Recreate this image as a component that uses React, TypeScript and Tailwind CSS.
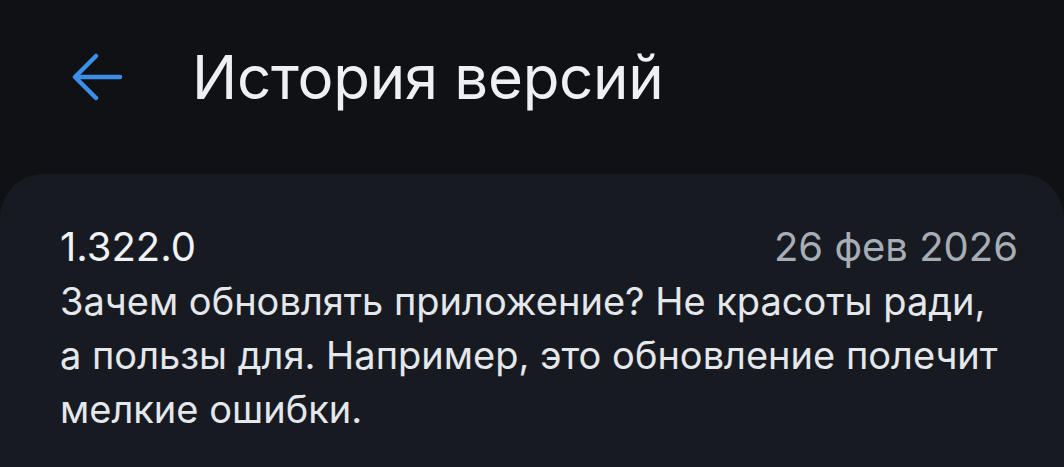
export default function App() {
  return (
    <div
      className="w-[1064px] h-[467px] overflow-hidden bg-[#0f1115] flex flex-col"
      style={{ fontFamily: "Inter, 'Noto Sans', sans-serif" }}
    >
      {/* Header */}
      <div className="h-[174px] flex items-center pl-[72px] pb-[20px] shrink-0">
        <svg
          width="52"
          height="48"
          viewBox="0 0 52 48"
          fill="none"
          stroke="#3d8ee9"
          strokeWidth="4.5"
          strokeLinecap="round"
          strokeLinejoin="round"
        >
          <path d="M48 24H4" />
          <path d="M24 3L3 24L24 45" />
        </svg>
        <h1 className="ml-[68px] text-[60px] leading-none text-[#eef0f3] font-normal tracking-[-0.3px]">
          История версий
        </h1>
      </div>

      {/* Card */}
      <div className="flex-1 bg-[#171b21] rounded-t-[44px] pl-[60px] pr-[44px] pt-[46px]">
        <div className="flex items-baseline justify-between">
          <span className="text-[40px] leading-[54px] text-[#f0f2f5]">1.322.0</span>
          <span className="text-[40px] leading-[54px] text-[#a7adb6] mr-[2px]">26 фев 2026</span>
        </div>
        <p className="text-[38px] leading-[54px] text-[#e4e7eb] whitespace-nowrap">
          Зачем обновлять приложение? Не красоты ради,
          <br />
          а пользы для. Например, это обновление полечит
          <br />
          мелкие ошибки.
        </p>
      </div>
    </div>
  )
}
